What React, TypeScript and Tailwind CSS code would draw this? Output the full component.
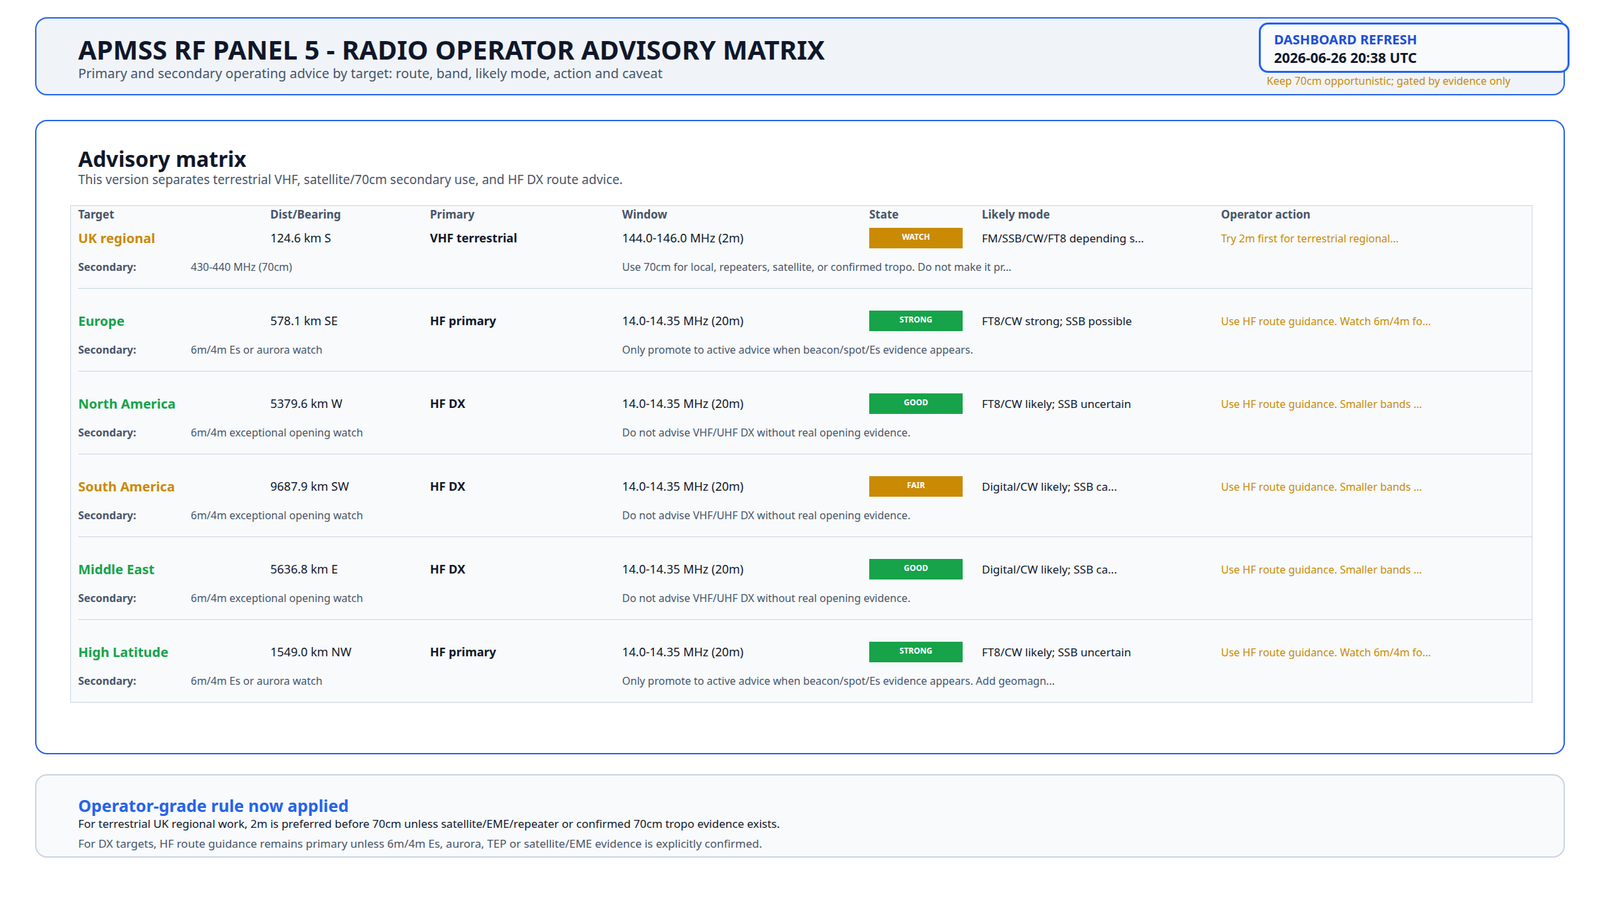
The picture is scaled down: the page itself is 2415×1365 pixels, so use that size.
import React from 'react';

interface Row {
  target: string;
  good: boolean;
  dist: string;
  primary: string;
  window: string;
  state: string;
  mode: string;
  action: string;
  secondary: string;
  note: string;
}

const rows: Row[] = [
  { target: 'UK regional', good: false, dist: '124.6 km S', primary: 'VHF terrestrial', window: '144.0-146.0 MHz (2m)', state: 'WATCH', mode: 'FM/SSB/CW/FT8 depending s...', action: 'Try 2m first for terrestrial regional...', secondary: '430-440 MHz (70cm)', note: 'Use 70cm for local, repeaters, satellite, or confirmed tropo. Do not make it pr...' },
  { target: 'Europe', good: true, dist: '578.1 km SE', primary: 'HF primary', window: '14.0-14.35 MHz (20m)', state: 'STRONG', mode: 'FT8/CW strong; SSB possible', action: 'Use HF route guidance. Watch 6m/4m fo...', secondary: '6m/4m Es or aurora watch', note: 'Only promote to active advice when beacon/spot/Es evidence appears.' },
  { target: 'North America', good: true, dist: '5379.6 km W', primary: 'HF DX', window: '14.0-14.35 MHz (20m)', state: 'GOOD', mode: 'FT8/CW likely; SSB uncertain', action: 'Use HF route guidance. Smaller bands ...', secondary: '6m/4m exceptional opening watch', note: 'Do not advise VHF/UHF DX without real opening evidence.' },
  { target: 'South America', good: false, dist: '9687.9 km SW', primary: 'HF DX', window: '14.0-14.35 MHz (20m)', state: 'FAIR', mode: 'Digital/CW likely; SSB ca...', action: 'Use HF route guidance. Smaller bands ...', secondary: '6m/4m exceptional opening watch', note: 'Do not advise VHF/UHF DX without real opening evidence.' },
  { target: 'Middle East', good: true, dist: '5636.8 km E', primary: 'HF DX', window: '14.0-14.35 MHz (20m)', state: 'GOOD', mode: 'Digital/CW likely; SSB ca...', action: 'Use HF route guidance. Smaller bands ...', secondary: '6m/4m exceptional opening watch', note: 'Do not advise VHF/UHF DX without real opening evidence.' },
  { target: 'High Latitude', good: true, dist: '1549.0 km NW', primary: 'HF primary', window: '14.0-14.35 MHz (20m)', state: 'STRONG', mode: 'FT8/CW likely; SSB uncertain', action: 'Use HF route guidance. Watch 6m/4m fo...', secondary: '6m/4m Es or aurora watch', note: 'Only promote to active advice when beacon/spot/Es evidence appears. Add geomagn...' },
];

const cols = 'grid grid-cols-[290px_241px_290px_373px_170px_361px_1fr] items-center';

const App = () => {
  return (
    <div className="min-h-[1365px] bg-white px-[53px] pt-[26px] font-[family-name:'DejaVu_Sans',sans-serif] text-[#0f172a]">
      {/* header */}
      <div className="relative h-[118px] rounded-[18px] border-2 border-[#2563eb] bg-[#f0f4f9] pl-[63px] pt-[22px]">
        <h1 className="text-[40px] font-bold leading-[50px]">APMSS RF PANEL 5 - RADIO OPERATOR ADVISORY MATRIX</h1>
        <p className="text-[20px] leading-[22px] text-[#475569]">Primary and secondary operating advice by target: route, band, likely mode, action and caveat</p>
        <span className="absolute right-[80px] top-[84px] text-[16px] leading-[20px] text-[#ca8a04]">Keep 70cm opportunistic; gated by evidence only</span>
        <div className="absolute right-[-9px] top-[6px] h-[76px] w-[469px] rounded-[14px] border-[3px] border-[#2563eb] bg-[#f8fafc] pl-[20px] pt-[10px] font-[family-name:'Liberation_Sans',sans-serif]">
          <div className="text-[20px] font-bold leading-[26px] text-[#1d4ed8]">DASHBOARD REFRESH</div>
          <div className="text-[21px] font-bold leading-[28px] text-[#0f172a]">2026-06-26 20:38 UTC</div>
        </div>
      </div>

      {/* matrix */}
      <div className="mt-[37px] h-[958px] rounded-[18px] border-2 border-[#2563eb] bg-white pl-[51px] pr-[47px] pt-[38px]">
        <h2 className="pl-[12px] text-[32px] font-bold leading-[38px]">Advisory matrix</h2>
        <p className="pl-[12px] text-[19px] leading-[24px] text-[#475569]">This version separates terrestrial VHF, satellite/70cm secondary use, and HF DX route advice.</p>
        <div className="mt-[27px] border border-[#cbd5e1] bg-[#f8fafc] pl-[11px]">
          <div className={`${cols} h-[24px] text-[17px] font-bold text-[#475569]`}>
            <span>Target</span><span>Dist/Bearing</span><span>Primary</span><span>Window</span><span>State</span><span>Likely mode</span><span>Operator action</span>
          </div>
          {rows.map((r, i) => (
            <div key={r.target} className={`${i === 0 ? 'pt-[9px]' : 'border-t border-[#cbd5e1] pt-[33px]'} pb-[22px]`}>
              <div className={`${cols} h-[31px] text-[18px]`}>
                <span className={`text-[20px] font-bold ${r.good ? 'text-[#16a34a]' : 'text-[#ca8a04]'}`}>{r.target}</span>
                <span>{r.dist}</span>
                <span className="font-bold">{r.primary}</span>
                <span>{r.window}</span>
                <span className={`flex h-[31px] w-[141px] items-start justify-center pt-[5px] text-[12px] font-bold text-white ${r.good ? 'bg-[#16a34a]' : 'bg-[#ca8a04]'}`}>{r.state}</span>
                <span className="text-[17px]">{r.mode}</span>
                <span className="text-[16px] text-[#ca8a04]">{r.action}</span>
              </div>
              <div className="mt-[16px] grid h-[22px] grid-cols-[170px_651px_1fr] items-center text-[16px] text-[#475569]">
                <span className="font-bold">Secondary:</span>
                <span>{r.secondary}</span>
                <span>{r.note}</span>
              </div>
            </div>
          ))}
        </div>
      </div>

      {/* rule */}
      <div className="mt-[30px] h-[126px] rounded-[18px] border-2 border-[#cbd5e1] bg-[#f8fafc] pl-[63px] pt-[30px]">
        <h3 className="text-[25px] font-bold leading-[30px] text-[#2563eb]">Operator-grade rule now applied</h3>
        <p className="text-[17px] leading-[26px] text-[#0f172a]">For terrestrial UK regional work, 2m is preferred before 70cm unless satellite/EME/repeater or confirmed 70cm tropo evidence exists.</p>
        <p className="mt-[4px] text-[17px] leading-[26px] text-[#475569]">For DX targets, HF route guidance remains primary unless 6m/4m Es, aurora, TEP or satellite/EME evidence is explicitly confirmed.</p>
      </div>
    </div>
  );
};

export default App;
